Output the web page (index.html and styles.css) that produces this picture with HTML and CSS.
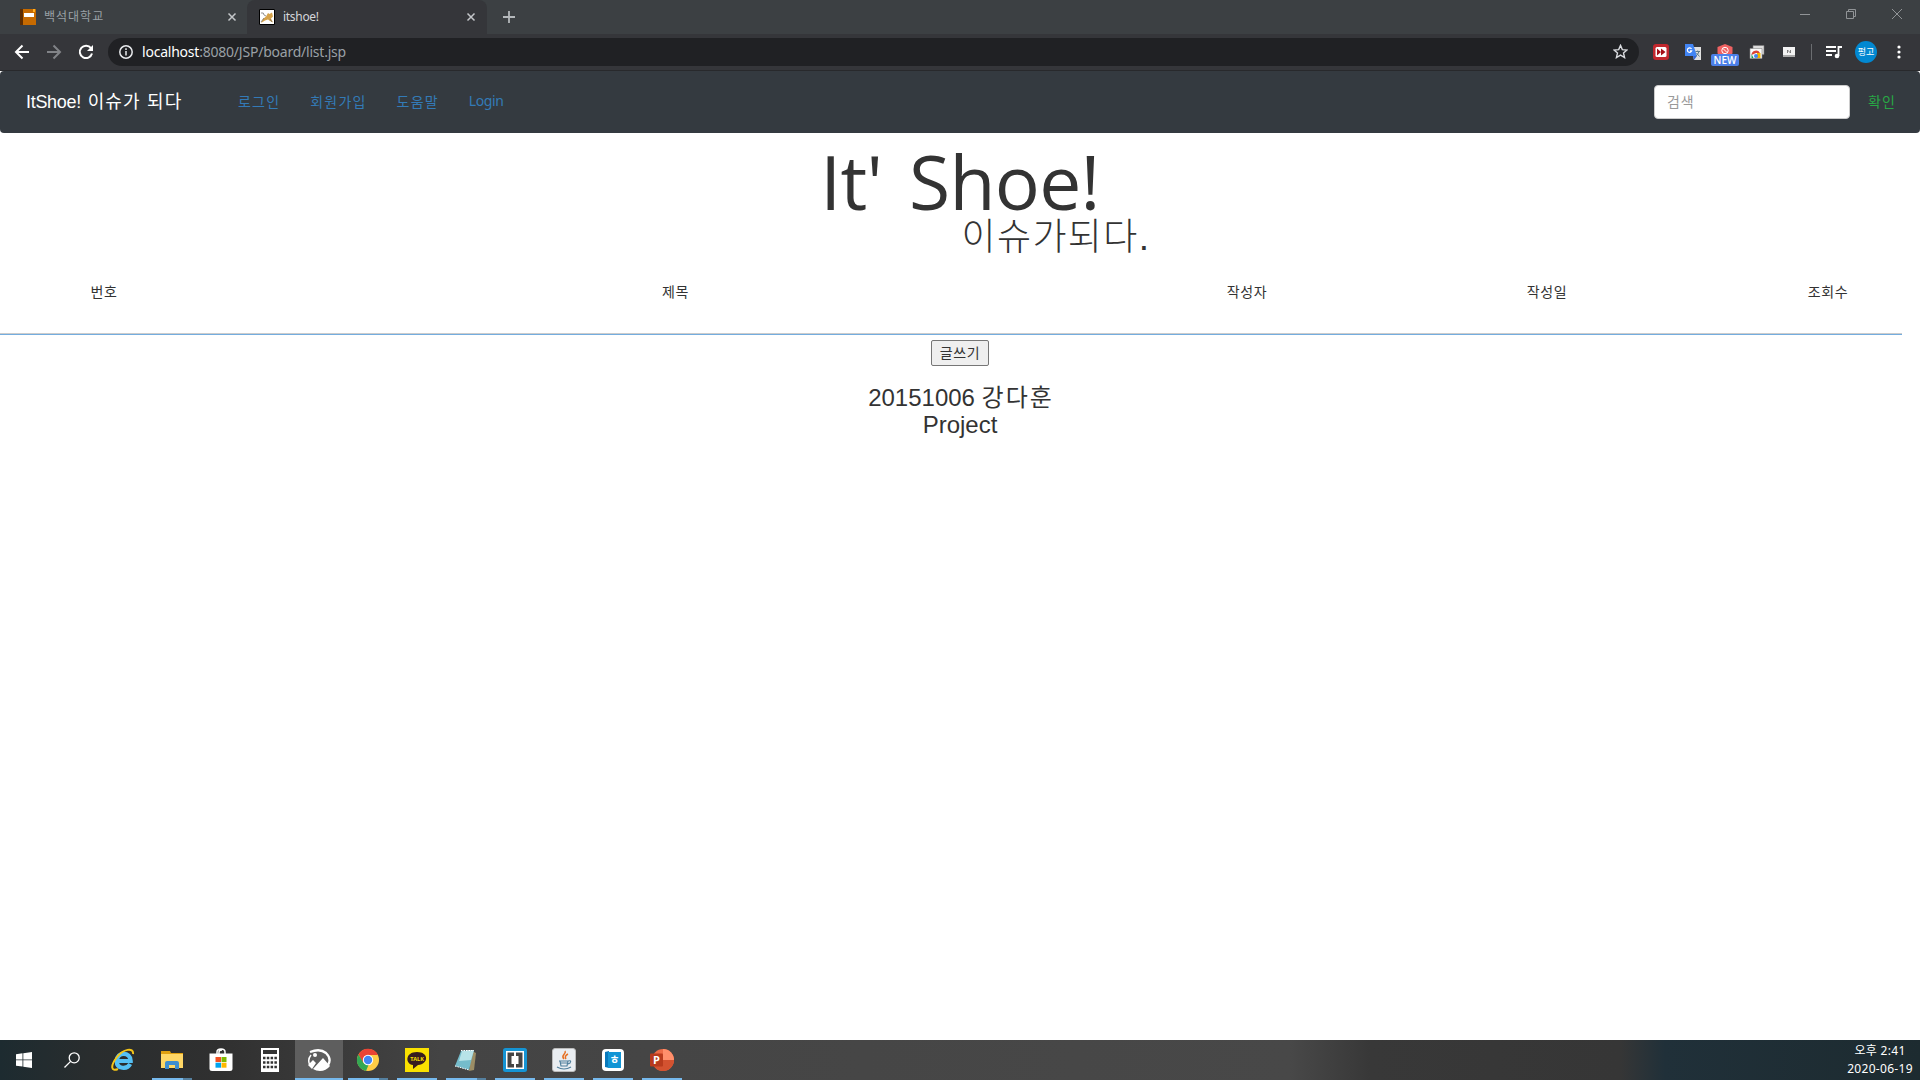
FILE: index.html
```html
<!DOCTYPE html>
<html lang="ko">
<head>
<meta charset="utf-8">
<title>itshoe!</title>
<link rel="stylesheet" href="styles.css">
</head>
<body>
<div class="screen">
  <div class="tabs">
    <div class="tab tab-idle">
      <svg class="fav" viewBox="0 0 16 16"><path fill="#c66a00" d="M0 0h16v16H0z"/><path fill="#5e2d00" d="M0 0h3v16H0z"/><path fill="#ffb020" d="M13 0h2v3h-2z"/><path fill="#fff" d="M4 4h10v4H4z"/></svg>
      <span class="tab-title">백석대학교</span>
      <svg class="x" viewBox="0 0 10 10"><path d="M1.500 1.500l7 7M8.500 1.500l-7 7"/></svg>
    </div>
    <div class="tab tab-active">
      <svg class="fav" viewBox="0 0 16 16"><path fill="#fff" stroke="#000" d="M.5.5h15v15H.5z"/><path fill="#d5a24a" d="M9 4l1.500 1L13 3.500l1 4-2 2 2 4-3-1.500-2-1.500-3 1-4 2.500 2-4 3-2.500z"/><path fill="none" stroke="#666" stroke-width=".7" d="M2 4q3-1 3 2l2 1M2 13l3-4M13 13l-2-3"/></svg>
      <span class="tab-title">itshoe!</span>
      <svg class="x" viewBox="0 0 10 10"><path d="M1.500 1.500l7 7M8.500 1.500l-7 7"/></svg>
    </div>
    <svg class="plus" viewBox="0 0 12 12"><path d="M6 0v12M0 6h12"/></svg>
    <div class="window-controls">
      <svg viewBox="0 0 10 10"><path d="M0 5.500h10"/></svg>
      <svg viewBox="0 0 10 10"><path d="M.5 2.500h7v7h-7zM2.500 2.500v-2h7v7h-2"/></svg>
      <svg viewBox="0 0 10 10"><path d="M0 0l10 10M10 0L0 10"/></svg>
    </div>
  </div>

  <div class="toolbar">
    <div class="nav-buttons">
      <svg viewBox="0 0 16 16" class="stroke"><path d="M15 8H2M8.500 1.500L2 8l6.500 6.500"/></svg>
      <svg viewBox="0 0 16 16" class="stroke dim"><path d="M1 8h13M7.500 1.500L14 8l-6.500 6.500"/></svg>
      <svg viewBox="0 0 16 16" class="stroke"><path d="M13 4.200A6.200 6.200 0 1 0 14 9.500"/><path d="M15 1v6H9z" fill="#fff" stroke="none"/></svg>
    </div>
    <div class="omnibox">
      <svg class="info" viewBox="0 0 14 14"><circle cx="7" cy="7" r="6.200"/><path d="M7 6v4.500M7 3.300v1.700"/></svg>
      <span class="url"><b>localhost</b>:8080/JSP/board/list.jsp</span>
      <svg class="star" viewBox="0 0 14 14"><path d="M7 1.300l1.700 3.900 4.300.4-3.200 2.800 1 4.200L7 10.400l-3.800 2.200 1-4.200L1 5.600l4.300-.4z"/></svg>
    </div>
    <div class="extensions">
      <svg viewBox="0 0 16 16"><rect width="16" height="16" rx="3" fill="#c1272d"/><rect x="2.500" y="3" width="11" height="10" rx="1.500" fill="#fff"/><path fill="#a50e16" d="M4 4.500L8 8l-4 3.500zM8 4.500L12.500 8 8 11.500z"/></svg>
      <svg viewBox="0 0 16 16"><path fill="#e0e0e0" d="M6 3h10v13H9z"/><path fill="#4285f4" d="M0 0h8l4 12H0z"/><path fill="#3367d6" d="M8 12h4l-3 4z"/><path fill="none" stroke="#fff" stroke-width="1.200" d="M6.500 5a2.200 2.200 0 1 0 .2 1.800H5"/><path fill="none" stroke="#607d8b" d="M10.500 7.500H15M12.700 6.500v1M14 7.500q-1 3-3 4.500M11.500 9l3 3.500"/></svg>
      <div class="ext-new">
        <svg viewBox="0 0 16 16"><path fill="#ef6262" d="M3 2l5-2 5 2 2.500 1v6l-2 5h-11l-2-5V3z"/><circle cx="8" cy="6.500" r="3.200" fill="none" stroke="#fff"/><path stroke="#fff" d="M6 4.500l4 4"/></svg>
        <span class="badge">NEW</span>
      </div>
      <svg viewBox="0 0 16 16"><path fill="#ddd" stroke="#777" stroke-width=".6" d="M4 1.500h11v9H4z"/><path fill="#fafafa" stroke="#888" stroke-width=".6" d="M1 4.500h12v10H1z"/><path fill="#db4437" d="M2.500 11a4.500 4.500 0 0 1 8.500-2H7z"/><path fill="#0f9d58" d="M2.500 10l2 4h-2z"/><path fill="#f4b400" d="M8 9h3.500v5H8z"/><circle cx="7" cy="12" r="2" fill="#4285f4"/></svg>
      <svg viewBox="0 0 16 16"><path fill="#f3f3f3" d="M2 3h12v8H2z"/><path fill="#aaa" d="M2 11h12v2H2z"/><path fill="none" stroke="#666" stroke-width=".8" d="M6.500 9V6l3 3V6"/></svg>
      <i class="divider"></i>
      <svg viewBox="0 0 16 16"><path fill="none" stroke="#fff" stroke-width="1.800" d="M0 3h10M0 7h10M0 11h6M12.500 12V3H16"/><circle cx="11" cy="12" r="2.300" fill="#fff"/></svg>
      <span class="avatar">펑고</span>
      <svg class="dots" viewBox="0 0 4 14"><circle cx="2" cy="2" r="1.600"/><circle cx="2" cy="7" r="1.600"/><circle cx="2" cy="12" r="1.600"/></svg>
    </div>
  </div>

  <main class="page">
    <nav class="navbar">
      <a class="brand">ItShoe! <span class="brand-ko">이슈가 되다</span></a>
      <div class="links"><a>로그인</a><a>회원가입</a><a>도움말</a><a class="latin">Login</a></div>
      <div class="search">검색</div>
      <a class="submit">확인</a>
    </nav>
    <header class="hero">
      <h1>It' Shoe!</h1>
      <p>이슈가되다.</p>
    </header>
    <div class="board-head"><span>번호</span><span>제목</span><span>작성자</span><span>작성일</span><span>조회수</span></div>
    <div class="rule"></div>
    <div class="actions"><button class="write">글쓰기</button></div>
    <footer class="credit"><div>20151006 <span class="credit-ko">강다훈</span></div><div>Project</div></footer>
  </main>

  <div class="taskbar">
    <div class="task start"><svg viewBox="0 0 16 16"><path fill="#fff" d="M0 2.200l6.500-.9v6.200H0zM7.300 1.200L16 0v7.500H7.300zM0 8.300h6.500v6.200L0 13.700zM7.300 8.300H16V16l-8.700-1.300z"/></svg></div>
    <div class="task find"><svg viewBox="0 0 16 16"><circle cx="10.200" cy="5.800" r="5" fill="none" stroke="#fff" stroke-width="1.300"/><path stroke="#fff" stroke-width="1.300" d="M6.600 9.400L.5 15.500"/></svg></div>
    <div class="task"><svg viewBox="0 0 24 24"><path fill="none" stroke="#55c1f5" stroke-width="4.200" d="M4.500 13h15.200c0-9.500-14-9.500-14 0 0 8.500 10.500 8.500 13.500 3"/><path fill="none" stroke="#f5c518" stroke-width="2" d="M22 6C23-1 12 1 6 9-1 18 0 24 7 21"/></svg></div>
    <div class="task run multi"><svg viewBox="0 0 24 24"><path fill="#e0a010" d="M1 3h9l1 2h12v4H1z"/><path fill="#ffd766" d="M1 6h22v14H1z"/><path fill="#3e8ed0" d="M5 21v-6q0-2 2-2h10q2 0 2 2v6h-4v-4H9v4z"/></svg></div>
    <div class="task"><svg viewBox="0 0 24 24"><path fill="none" stroke="#fff" stroke-width="1.500" d="M8 6V4q0-3 4-3t4 3v2M10 6V4q0-2 3-2"/><path fill="#fff" d="M.5 5.500h23v15q0 2.500-2.500 2.500H3q-2.500 0-2.500-2.500z"/><path fill="#f25022" d="M6.500 9H12v5H6.500z"/><path fill="#7fba00" d="M12.500 9h5v5h-5z"/><path fill="#00a4ef" d="M6.500 14.700H12v5H6.500z"/><path fill="#ffb900" d="M12.500 14.700h5v5h-5z"/></svg></div>
    <div class="task"><svg viewBox="0 0 24 24"><path fill="#fff" d="M3 0h18v24H3z"/><path fill="#333" d="M5 2h14v4H5z"/><path stroke="#333" stroke-width="2.500" stroke-dasharray="2.500 1.300" d="M5 10h14M5 14.500h14M5 19h14"/></svg></div>
    <div class="task run current"><svg viewBox="0 0 24 24"><path fill="none" stroke="#fff" stroke-width="2.300" d="M3 4q10-4 16 1 6 6 2 12"/><path fill="none" stroke="#fff" stroke-width="1.500" d="M4 7q-4 5-1 10"/><path fill="#fff" d="M1 17l5-5 3 3-4 6zM6 21l10-11 7 8q-4 5-10 5-4 0-7-2z"/><circle cx="8" cy="7" r="2" fill="#fff"/></svg></div>
    <div class="task run multi"><svg viewBox="0 0 24 24"><circle cx="12" cy="12" r="11" fill="#ffcd46"/><path fill="#ea4335" d="M2.500 6.500A11 11 0 0 1 22 7H12l-5 8z"/><path fill="#34a853" d="M2.500 6.500l5 8.500 5 2-2.500 6A11 11 0 0 1 2.500 6.500z"/><circle cx="12" cy="12" r="5.200" fill="#fff"/><circle cx="12" cy="12" r="4.200" fill="#4285f4"/></svg></div>
    <div class="task run"><svg viewBox="0 0 24 24"><path fill="#fae100" d="M0 0h24v24H0z"/><path fill="#371d1e" d="M12 4c-12 0-12 12-4 13v4l5-4c11-1 11-13-1-13z"/><text x="12" y="13" class="talk">TALK</text></svg></div>
    <div class="task run multi"><svg viewBox="0 0 24 24"><path fill="#9b8d65" d="M18 3l4 2-2 17-5 1z"/><path fill="#75bccb" d="M7 3l13-1-5 20-14-4z"/><path fill="#b8e3e8" d="M8 3l12-1-3 10-12 1z"/><path stroke="#fff" fill="none" stroke-dasharray="1.500 1" d="M7 2.500h13M1 18l14 4"/></svg></div>
    <div class="task run"><svg viewBox="0 0 24 24"><rect width="24" height="24" rx="2.500" fill="#1594d4"/><path fill="#fff" d="M3 3h18v18H3z"/><path fill="#444" d="M4.500 4.500H11V8H8.500v8H11v3.500H4.500zM19.500 4.500H13V8h2.500v8H13v3.500h6.500z"/></svg></div>
    <div class="task run"><svg viewBox="0 0 24 24"><rect x=".5" y=".5" width="23" height="23" rx="2.500" fill="#e9edf1" stroke="#bbb"/><path fill="none" stroke="#e76f22" stroke-width="1.500" d="M13 3c2 3-5 4-1 8M16 6q-4 2-2 5"/><path fill="none" stroke="#4f7f9c" stroke-width="1.200" d="M7 13h9M16 13q4-1 2 2l-2 1M8 13l1 5h6l1-5M5 19q7 4 14 0M8 15h7"/></svg></div>
    <div class="task run"><svg viewBox="0 0 24 24"><rect x="1" y="1" width="22" height="22" rx="4" fill="#fff"/><path fill="#0879bc" d="M4 4l4-1v17l-4-1z"/><path fill="#1295d5" d="M7 4h13v16H7z"/><text x="13.500" y="15.500" class="han">ㅎ</text></svg></div>
    <div class="task run"><svg viewBox="0 0 24 24"><circle cx="13" cy="12" r="11" fill="#ed6c47"/><path fill="#ff8f6b" d="M13 1a11 11 0 0 1 11 11H13z"/><path fill="#d35230" d="M2 12h22a11 11 0 0 1-22 0z"/><rect y="5.500" width="13" height="13" rx="1" fill="#b83b1d"/><text x="6.500" y="15.800" class="ppt">P</text></svg></div>
    <div class="clock"><span>오후 2:41</span><span>2020-06-19</span></div>
  </div>
</div>
</body>
</html>
```
FILE: styles.css
```css
* { box-sizing: border-box; }
body { margin: 0; overflow: hidden; font-family: "Noto Sans", "Noto Sans CJK KR", sans-serif; }
svg { display: block; flex: none; }
.screen { width: 1920px; height: 1080px; display: flex; flex-direction: column; background: #fff; }

.tabs { height: 34px; flex: none; display: flex; align-items: stretch; background: #3c4043; }
.tab { display: flex; align-items: center; color: #9aa0a6; font-size: 12px; }
.tab-idle { width: 247px; padding: 0 10px 0 20px; }
.tab-active { width: 240px; padding: 0 11px 0 12px; background: #35363a; border-radius: 8px 8px 0 0; color: #d5d7da; }
.tab-title { flex: 1; margin: -2px 0 0 8px; }
.tab-idle .tab-title { letter-spacing: 1px; }
.tab-active .tab-title { letter-spacing: -.3px; }
.fav { width: 16px; height: 16px; }
.x { width: 10px; height: 10px; stroke: #c4c7ca; stroke-width: 1.500; fill: none; }
.tab-active .x { width: 10px; height: 10px; }
.plus { width: 12px; height: 12px; margin: 11px 0 0 16px; stroke: #b4b8bb; stroke-width: 1.800; }
.window-controls { display: flex; gap: 36px; margin: 9px 18px 0 auto; }
.window-controls svg { width: 10px; height: 10px; fill: none; stroke: #919497; stroke-width: 1; }

.toolbar { height: 37px; flex: none; display: flex; align-items: center; background: #35363a; border-bottom: 1px solid #28292c; padding-bottom: 1px; }
.nav-buttons { width: 108px; display: flex; gap: 16px; padding-left: 14px; }
.nav-buttons svg { width: 16px; height: 16px; }
.stroke { fill: none; stroke: #fff; stroke-width: 2; }
.dim { stroke: #818387; }
.omnibox { width: 1531px; height: 28px; display: flex; align-items: center; padding: 0 11px; border-radius: 14px; background: #202124; }
.info { width: 14px; height: 14px; fill: none; stroke: #e8eaed; stroke-width: 1.500; }
.url { flex: 1; margin-left: 9px; font-size: 14px; letter-spacing: -.22px; color: #9aa0a6; }
.url b { font-weight: 400; color: #fff; }
.star { width: 15px; height: 15px; fill: none; stroke: #dadce0; stroke-width: 1.300; }
.extensions { flex: 1; display: flex; align-items: center; padding-left: 14px; }
.extensions > svg, .ext-new { width: 16px; height: 16px; margin-right: 16px; }
.ext-new { position: relative; }
.badge { position: absolute; left: -6px; top: 10px; width: 28px; height: 12px; border-radius: 2px; background: #4c80e8; color: #fff; font: 600 10px/12px "Open Sans", sans-serif; text-align: center; }
.divider { width: 1px; height: 16px; margin: 0 14px 0 -2px; background: #6b6d70; }
.extensions .divider + svg { margin-right: 13px; }
.avatar { width: 22px; height: 22px; border-radius: 50%; background: #0288d1; color: #fff; font-size: 9px; line-height: 21px; text-align: center; }
.extensions .dots { width: 4px; height: 14px; margin: 0 0 0 20px; fill: #fff; }

.page { flex: 1; color: #333; font-size: 14px; }
.navbar { height: 62px; display: flex; align-items: center; padding: 0 24px 0 26px; background: #343a40; border-radius: 4px; }
.brand { width: 212px; color: #fff; font: 18px/20px "Liberation Sans", "Noto Sans CJK KR", sans-serif; letter-spacing: -.3px; white-space: nowrap; }
.brand-ko { margin-left: 2px; letter-spacing: 1.150px; }
.links { flex: 1; display: flex; gap: 30px; margin-top: -2px; color: #337ab7; font-family: "Noto Sans CJK KR", sans-serif; letter-spacing: 1.200px; }
.links .latin { font-family: "Noto Sans", sans-serif; letter-spacing: -.4px; }
.search { width: 196px; height: 34px; padding: 0 12px; border: 1px solid #ccc; border-radius: 4px; background: #fff; color: #999; line-height: 31px; letter-spacing: .8px; }
.submit { width: 28px; margin: -2px 0 0 18px; color: #28a745; letter-spacing: 1px; white-space: nowrap; }
.hero { height: 138px; display: flex; flex-direction: column; align-items: center; }
.hero h1 { margin: 10px 0 0; font: 400 75px/76px "Open Sans", sans-serif; letter-spacing: -.7px; word-spacing: 8px; white-space: pre; }
.hero p { margin: -1px 0 0 192px; font: 300 37px/40px "Liberation Sans", "Noto Sans CJK KR", sans-serif; letter-spacing: 1.400px; }
.board-head { height: 62px; display: grid; grid-template-columns: 208px 935px 208px 392px 170px; padding-top: 11px; text-align: center; line-height: 20px; letter-spacing: .7px; }
.rule { width: 1902px; height: 2px; background: #74addf; border-top: 1px solid #ccc; }
.actions { display: flex; justify-content: center; padding-top: 5px; }
.write { width: 58px; height: 26px; padding: 0 0 3px; border: 1px solid #767676; border-radius: 2px; background: #efefef; color: #333; font: 14px/20px "Noto Sans CJK KR", sans-serif; letter-spacing: .7px; }
.credit { padding-top: 19px; text-align: center; font: 24px/26.4px "Liberation Sans", "Noto Sans CJK KR", sans-serif; }
.credit div { height: 27px; }
.credit-ko { letter-spacing: 2px; margin-right: -2px; }

.taskbar { height: 40px; flex: none; display: flex; background: linear-gradient(90deg, #1d2b30 0, #292d2e 90px, #303030 220px, #444 440px, #484848 1290px, #383838 1370px, #363636 1620px, #203039 1665px, #1d2b30 100%); }
.task { width: 48px; margin-right: 1px; display: flex; align-items: center; justify-content: center; }
.task svg { width: 24px; height: 24px; }
.start { margin-right: 0; }
.find { margin-right: 3px; }
.start svg, .find svg { width: 16px; height: 16px; }
.run { background: linear-gradient(#76b9ed, #76b9ed) 4px 38px / 40px 2px no-repeat; }
.multi { background: linear-gradient(90deg, #76b9ed 31px, #55809f 31px) 4px 38px / 40px 2px no-repeat; }
.current { background: linear-gradient(#76b9ed, #76b9ed) 0 38px / 48px 2px no-repeat, #5e5e5e; }
.talk { font: 700 5.500px "Open Sans", sans-serif; fill: #fae100; text-anchor: middle; }
.han { font: 700 11px "Noto Sans CJK KR", sans-serif; fill: #fff; text-anchor: middle; }
.ppt { font: 700 11px "Open Sans", sans-serif; fill: #fff; text-anchor: middle; }
.clock { width: 80px; margin-left: auto; display: flex; flex-direction: column; align-items: center; padding-top: 2px; color: #fff; font-size: 12px; line-height: 18px; letter-spacing: .3px; }
```
